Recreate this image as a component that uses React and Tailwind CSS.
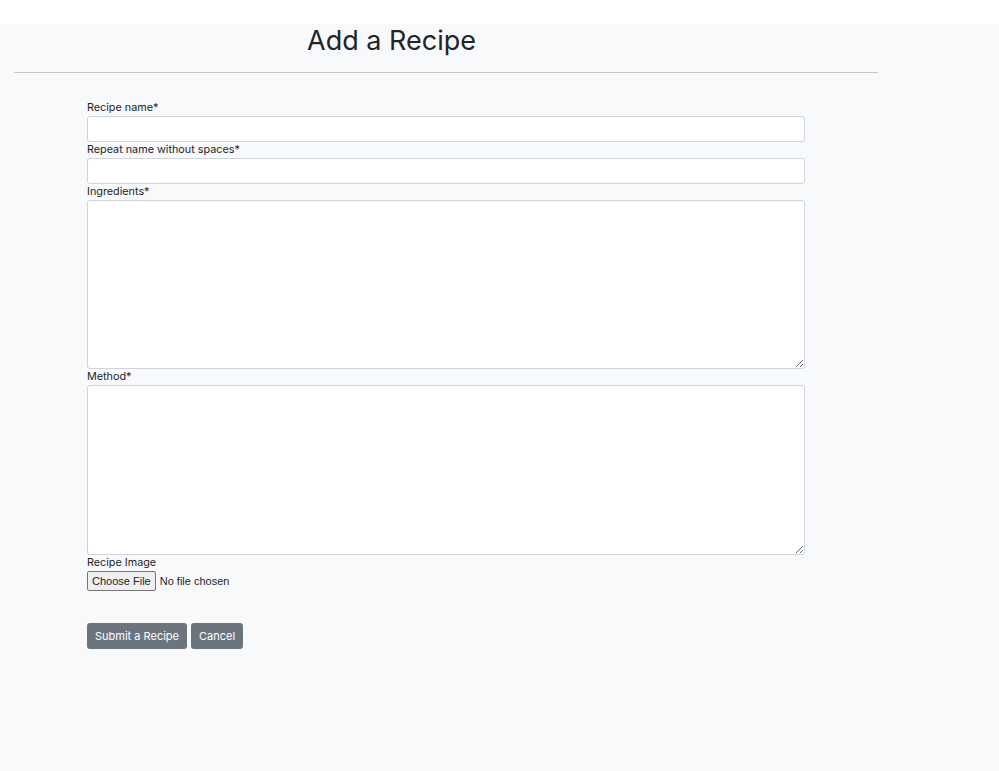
export default function App() {
  return (
    <div className="min-h-[771px] bg-white pt-6" style={{ fontFamily: 'Inter, "Noto Sans", sans-serif' }}>
      <div className="min-h-[747px] bg-[#f8f9fa] text-[#212529]">
        <h2 className="pl-[307px] pt-[3px] text-[27px] leading-[28px] font-normal">Add a Recipe</h2>
        <hr className="mt-[17px] ml-[14px] w-[864px] border-t border-[#c4c6c8]" />

        <form className="ml-[87px] mt-[27px] w-[718px]" onSubmit={(e) => e.preventDefault()}>
          <label className="block text-[10.8px] leading-[16px]">Recipe name*</label>
          <input type="text" className="block h-[26px] w-full rounded-[3px] border border-[#ced4da] bg-white px-2 text-[12px]" />

          <label className="block text-[10.8px] leading-[16px]">Repeat name without spaces*</label>
          <input type="text" className="block h-[26px] w-full rounded-[3px] border border-[#ced4da] bg-white px-2 text-[12px]" />

          <label className="block text-[10.8px] leading-[16px]">Ingredients*</label>
          <textarea className="block h-[169px] w-full rounded-[3px] border border-[#ced4da] bg-white px-2 text-[12px]" />

          <label className="block text-[10.8px] leading-[16px]">Method*</label>
          <textarea className="block h-[170px] w-full rounded-[3px] border border-[#ced4da] bg-white px-2 text-[12px]" />

          <label className="block text-[10.8px] leading-[16px]">Recipe Image</label>
          <input
            type="file"
            className="block h-[20px] text-[11px] leading-[18px] file:mr-[4px] file:h-[20px] file:rounded-[2px] file:border file:border-[#767676] file:bg-[#efefef] file:px-[4px] file:text-[11px]"
            style={{ fontFamily: '"Liberation Sans", Arial, sans-serif' }}
          />

          <div className="mt-[32px] flex gap-[4px]">
            <button type="submit" className="h-[26px] rounded-[3px] bg-[#6c757d] px-[8px] text-[11px] font-normal text-white">
              Submit a Recipe
            </button>
            <button type="button" className="h-[26px] rounded-[3px] bg-[#6c757d] px-[8px] text-[11px] font-normal text-white">
              Cancel
            </button>
          </div>
        </form>
      </div>
    </div>
  );
}
